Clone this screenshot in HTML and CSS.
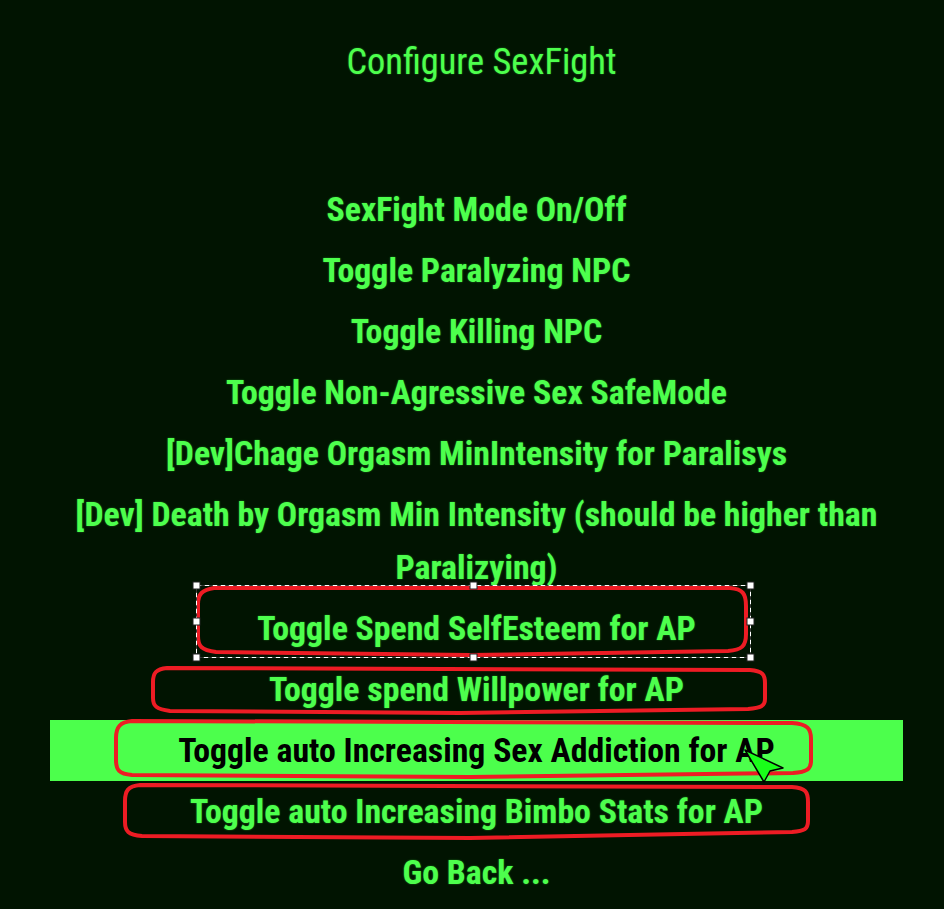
FILE: index.html
```html
<!DOCTYPE html>
<html>
<head>
<meta charset="utf-8">
<link rel="stylesheet" href="styles.css">
</head>
<body>
<div class="screen">
  <h1 class="title">Configure SexFight</h1>
  <ul class="menu">
    <li class="item">SexFight Mode On/Off</li>
    <li class="item">Toggle Paralyzing NPC</li>
    <li class="item">Toggle Killing NPC</li>
    <li class="item">Toggle Non-Agressive Sex SafeMode</li>
    <li class="item">[Dev]Chage Orgasm MinIntensity for Paralisys</li>
    <li class="item">[Dev] Death by Orgasm Min Intensity (should be higher than Paralizying)</li>
    <li class="item">Toggle Spend SelfEsteem for AP</li>
    <li class="item">Toggle spend Willpower for AP</li>
    <li class="item active">Toggle auto Increasing Sex Addiction for AP</li>
    <li class="item">Toggle auto Increasing Bimbo Stats for AP</li>
    <li class="item">Go Back ...</li>
  </ul>
</div>
<svg class="annotations" width="944" height="909" viewBox="0 0 944 909">
  <g fill="none" stroke="#ed1c24" stroke-width="4" stroke-linejoin="round">
    <path d="M214 588 L730 588 C743 589 746 594 746 606 L746 634 C746 646 742 650 728 651 L470 655 L216 652 C201 650 198 646 198 636 L198 604 C198 594 202 590 214 588 Z"/>
    <path d="M167 668 L750 670 C763 671 765 675 765 683 L765 699 C765 706 761 708 748 709 L460 713 L170 711 C156 709 153 706 153 698 L153 682 C153 673 156 669 167 668 Z"/>
    <path d="M132 721 L792 723 C808 724 811 729 811 739 L811 761 C811 769 807 772 793 773 L470 777 L132 775 C119 774 116 770 116 760 L116 738 C116 727 120 722 132 721 Z"/>
    <path d="M140 785 L792 787 C806 788 808 792 808 802 L808 821 C808 829 805 831 792 832 L470 838 L142 836 C128 835 125 831 125 822 L125 801 C125 791 128 786 140 785 Z"/>
  </g>
  <g class="selection">
    <rect x="196.5" y="585.5" width="554" height="72" fill="none" stroke="#fff" stroke-width="1" stroke-dasharray="5 3"/>
    <rect x="196.5" y="585.5" width="554" height="72" fill="none" stroke="#333" stroke-width="1" stroke-dasharray="3 5" stroke-dashoffset="-5"/>
    <g fill="#fff" stroke="#222" stroke-width="1">
      <rect x="193" y="582" width="7" height="7"/>
      <rect x="470" y="582" width="7" height="7"/>
      <rect x="747" y="582" width="7" height="7"/>
      <rect x="193" y="618" width="7" height="7"/>
      <rect x="747" y="618" width="7" height="7"/>
      <rect x="193" y="654" width="7" height="7"/>
      <rect x="470" y="654" width="7" height="7"/>
      <rect x="747" y="654" width="7" height="7"/>
    </g>
  </g>
  <path d="M745 750 L783 768 L770 771 L764 782 Z" fill="#19ff19" stroke="#000" stroke-width="1.5" stroke-linejoin="round"/>
</svg>
</body>
</html>
```
FILE: styles.css
```css
html, body {
  margin: 0;
  padding: 0;
  background: #011401;
}

body {
  width: 944px;
  height: 909px;
  overflow: hidden;
  position: relative;
  font-family: "Roboto Condensed", Roboto, "Liberation Sans Narrow", sans-serif;
  font-stretch: condensed;
  color: #4dff4d;
}

.screen {
  padding: 37px 41px 0 50px;
}

.title {
  margin: 0 0 92px 0;
  padding-left: 10px;
  font-size: 36.4px;
  font-weight: 400;
  line-height: 50px;
  text-align: center;
  text-shadow: 0 0 2px rgba(77, 255, 77, 0.45);
}

.menu {
  list-style: none;
  margin: 0;
  padding: 0;
}

.item {
  padding: 4px 0;
  line-height: 53px;
  font-size: 33.8px;
  font-weight: 700;
  text-align: center;
  text-shadow: 0 0 2px rgba(77, 255, 77, 0.45);
}

.item.active {
  background: #4cff4c;
  color: #000;
  text-shadow: none;
}

.annotations {
  position: absolute;
  top: 0;
  left: 0;
  pointer-events: none;
}
```
